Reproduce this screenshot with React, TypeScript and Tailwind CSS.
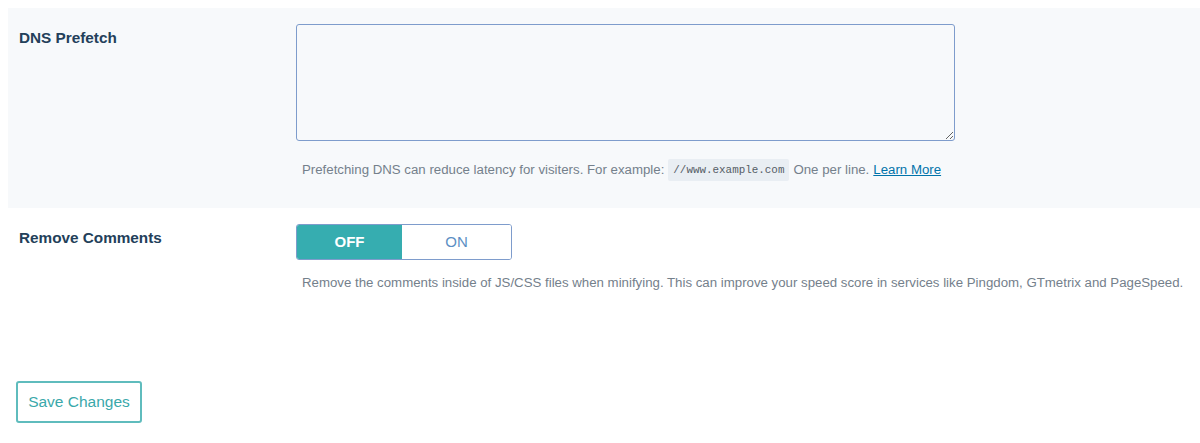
import React, { useState } from 'react'

const App: React.FC = () => {
  const [removeComments, setRemoveComments] = useState(false)

  return (
    <div className="min-h-[443px] w-[1200px] bg-white text-[13.25px] text-[#74808b]" style={{ fontFamily: '"Liberation Sans", Arial, sans-serif' }}>
      <div className="pt-2 pl-2">
        <div className="flex bg-[#f7f9fb] pt-4 pb-[27px]">
          <div className="w-[288px] shrink-0 pl-[11px] pt-[3px] text-[15.3px] font-bold text-[#23405a]">DNS Prefetch</div>
          <div className="flex flex-col">
            <textarea className="h-[117px] w-[659px] rounded-[3px] border border-[#7e9ccc] bg-[#f7f9fb] p-2 outline-none" />
            <p className="mt-[18px] flex items-center pl-[6px] leading-[20px]">
              Prefetching DNS can reduce latency for visiters. For example:
              <code className="mx-[4px] rounded-[2px] bg-[#e9eef3] px-[5px] py-[1px] font-['Liberation_Mono',monospace] text-[10.9px] text-[#555d66]">//www.example.com</code>
              One per line.
              <a href="#" className="ml-[4px] text-[#0073aa] underline">Learn More</a>
            </p>
          </div>
        </div>
      </div>

      <div className="flex pt-[16px]">
        <div className="w-[296px] shrink-0 pl-[19px] pt-[3px] text-[15.3px] font-bold text-[#23405a]">Remove Comments</div>
        <div className="flex flex-col">
          <div className="flex h-[36px] w-[216px] overflow-hidden rounded-[3px] border border-[#7e9ccc] text-[15px]">
            <button
              onClick={() => setRemoveComments(false)}
              className={removeComments ? 'w-[105px] bg-white text-[#5b8fc4]' : 'w-[105px] bg-[#36adb0] font-bold text-white'}
            >
              OFF
            </button>
            <button
              onClick={() => setRemoveComments(true)}
              className={removeComments ? 'flex-1 bg-[#36adb0] font-bold text-white' : 'flex-1 bg-white text-[#5b8fc4]'}
            >
              ON
            </button>
          </div>
          <p className="mt-[13px] pl-[6px] leading-[20px]">
            Remove the comments inside of JS/CSS files when minifying. This can improve your speed score in services like Pingdom, GTmetrix and PageSpeed.
          </p>
        </div>
      </div>

      <div className="pl-4 pt-[88px]">
        <button className="h-[42px] w-[126px] rounded-[3px] border-2 border-[#5fbcbd] bg-white text-[15.5px] text-[#3aa8aa]">Save Changes</button>
      </div>
    </div>
  )
}

export default App
